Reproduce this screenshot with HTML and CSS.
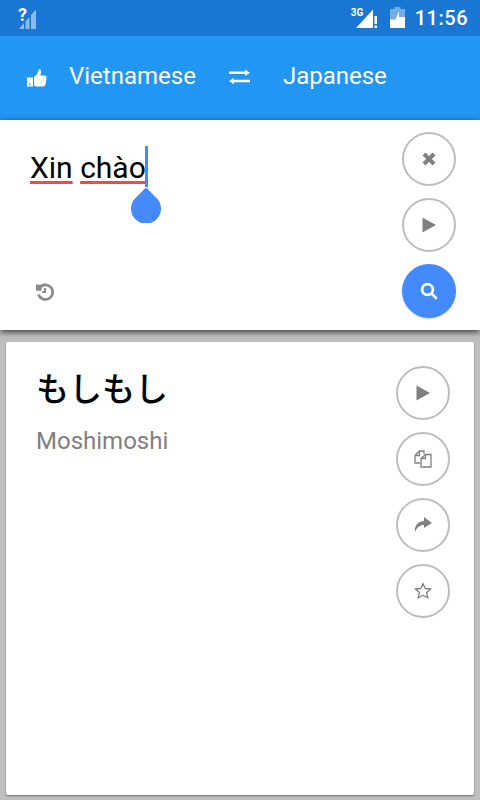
FILE: index.html
```html
<!DOCTYPE html>
<html lang="en">
<head>
<meta charset="utf-8">
<title>Translate</title>
<link rel="stylesheet" href="styles.css">
</head>
<body>
<div class="app">
  <header class="status">
    <div class="status-left">
      <span class="q">?</span>
      <svg class="bars" width="20" height="20" viewBox="0 0 20 20"><path fill="#fff" fill-opacity=".5" d="M1 20L6 14V20ZM7.500 12.500L11.500 8V20H7.500ZM13 6L18 0.500V20H13Z"/></svg>
    </div>
    <div class="status-right">
      <span class="net">3G</span>
      <svg class="sig" width="22" height="19" viewBox="0 0 22 19"><path fill="#fff" d="M0 19L17 0.500V19Z"/><path fill="#fff" d="M18.500 7H21V15H18.500ZM18.500 16.500H21V19H18.500Z"/></svg>
      <svg class="batt" width="15" height="21" viewBox="0 0 15 21"><path fill="#fff" fill-opacity=".4" d="M4.500 0H10.500V2H15V21H0V2H4.500Z"/><path fill="#fff" d="M0 21V12.500H5.500L9 4.500V10H15V21Z"/></svg>
      <span class="time">11:56</span>
    </div>
  </header>

  <nav class="toolbar">
    <svg class="thumb" width="20" height="20" viewBox="0 0 20 20"><path fill="#fff" d="M0 9.500H6V18.500H0Z"/><path fill="#2196f3" d="M2 15.500H3.500V17H2Z"/><path fill="#fff" d="M7 9L10.500 5.500L12 1Q14.500 1 14 4.500L13.300 7.500H18Q20 8 19.500 10L18.500 16.500Q18 18.500 16 18.500H10Q8 18.500 7 17.500Z"/></svg>
    <span class="lang lang-src">Vietnamese</span>
    <svg class="swap" width="24" height="18" viewBox="0 0 24 18"><path fill="#fff" d="M1 3.500H17V1.500L22 4.800L17 8V6H1ZM22 11.700V14.300H6V16.300L1 13L6 9.700V11.700Z"/></svg>
    <span class="lang">Japanese</span>
  </nav>

  <section class="input-panel">
    <div class="input-main">
      <div class="input-line">
        <span class="word">Xin</span> <span class="word word-last">chào</span><span class="caret"></span>
        <svg class="handle" width="32" height="36" viewBox="0 0 32 36"><path fill="#448aff" d="M16 0.500L26 10.500A15 15 0 1 1 6 10.500Z"/></svg>
      </div>
      <svg class="history" width="20" height="20" viewBox="0 0 20 20"><path fill="none" stroke="#8a8a8a" stroke-width="2.600" d="M4.400 6A7.300 7.300 0 1 1 3.500 12.500"/><path fill="#8a8a8a" d="M1 2.500L8 3L6 9L1 8.500Z"/><path fill="#8a8a8a" d="M9 6H11V11H7V9.300H9Z"/></svg>
    </div>
    <div class="actions">
      <button class="circle"><svg width="14" height="14" viewBox="0 0 14 14"><path stroke="#808080" stroke-width="4" d="M2 2L12 12M12 2L2 12"/></svg></button>
      <button class="circle"><svg width="16" height="18" viewBox="0 0 16 18"><path fill="#808080" d="M1.500 1.500L15 9L1.500 16.500Z"/></svg></button>
      <button class="circle circle-primary"><svg width="20" height="20" viewBox="0 0 20 20"><circle cx="8.500" cy="8.500" r="5.400" fill="none" stroke="#fff" stroke-width="2.800"/><path stroke="#fff" stroke-width="2.600" stroke-linecap="round" d="M12.500 12.500L17 17"/></svg></button>
    </div>
  </section>

  <main class="result-area">
    <article class="card">
      <div class="card-text">
        <div class="jp">もしもし</div>
        <div class="roman">Moshimoshi</div>
      </div>
      <div class="actions">
        <button class="circle"><svg width="16" height="18" viewBox="0 0 16 18"><path fill="#808080" d="M1.500 1.500L15 9L1.500 16.500Z"/></svg></button>
        <button class="circle"><svg width="20" height="20" viewBox="0 0 20 20"><path fill="none" stroke="#808080" stroke-width="1.300" d="M7 14H2V6.500L6.500 2H11V5M6.500 2V6.500H2M8 9.500L12.500 5.500H18V18H8ZM12.500 5.500V9.500H8"/></svg></button>
        <button class="circle"><svg width="20" height="20" viewBox="0 0 20 20"><path fill="#808080" d="M11 2L19 8L11 13V10C7 10 4 12 2 17C1 11 5 6 11 6Z"/></svg></button>
        <button class="circle"><svg width="20" height="20" viewBox="0 0 20 20"><path fill="none" stroke="#808080" stroke-width="1.300" stroke-linejoin="round" d="M10 2.500L12.200 7.500L17.800 8L13.600 11.600L14.900 17L10 14.200L5.100 17L6.400 11.600L2.200 8L7.800 7.500Z"/></svg></button>
      </div>
    </article>
  </main>
</div>
</body>
</html>
```

FILE: styles.css
```css
* { box-sizing: border-box; }
html, body { margin: 0; padding: 0; }
body { font-family: Roboto, "Noto Sans CJK JP", sans-serif; }
.app { width: 480px; height: 800px; display: flex; flex-direction: column; overflow: hidden; background: #bfbfbf; }

.status { height: 36px; flex: none; background: #1976d2; color: #fff; display: flex; justify-content: space-between; align-items: center; }
.status-left { display: flex; align-items: center; padding-left: 18px; height: 36px; }
.q { font-size: 18px; font-weight: 700; width: 0; position: relative; top: -4px; }
.bars { margin-top: 2px; margin-left: 0; }
.status-right { display: flex; align-items: center; padding-right: 12px; }
.net { font-size: 10px; font-weight: 700; width: 0; position: relative; left: -5px; top: -6px; white-space: nowrap; }
.sig { margin-left: 0; margin-top: 0; }
.batt { margin-left: 12px; margin-top: -2px; }
.time { font-size: 20px; font-weight: 500; margin-left: 10px; letter-spacing: .5px; }

.toolbar { height: 84px; flex: none; background: #2196f3; display: flex; align-items: center; padding: 0 0 4px 27px; color: #fff; }
.thumb { margin-top: 4px; }
.lang { font-size: 24px; }
.lang-src { margin-left: 22px; }
.swap { margin: 2px 31px 0 32px; }

.input-panel { height: 210px; flex: none; background: #fff; display: flex; justify-content: space-between; padding: 12px 24px 12px 30px; box-shadow: 0 2px 6px rgba(0,0,0,.7); position: relative; }
.input-main { display: flex; flex-direction: column; justify-content: space-between; }
.input-line { position: relative; font-size: 30px; line-height: 48px; color: #000; margin-top: 12px; white-space: nowrap; }
.word { text-decoration: underline #f44; text-decoration-thickness: 3px; text-underline-offset: 3px; }
.caret { position: absolute; left: 115px; top: 2px; width: 3px; height: 41px; background: #448aff; }
.handle { position: absolute; left: 100px; top: 43px; }
.history { margin: 0 0 16px 5px; }

.actions { display: flex; flex-direction: column; gap: 12px; }
.circle { width: 54px; height: 54px; border-radius: 50%; border: 2px solid #bdbdbd; background: #fff; padding: 0; display: flex; align-items: center; justify-content: center; }
.circle-primary { background: #448aff; border: 0; box-shadow: 0 1px 2px rgba(0,0,0,.2); }

.result-area { flex: 1; padding: 12px 6px 5px; }
.card { height: 100%; background: #fff; border-radius: 2px; box-shadow: 0 1px 2px rgba(0,0,0,.45); display: flex; justify-content: space-between; padding: 24px 24px 0 30px; }
.jp { font-size: 33px; font-weight: 500; line-height: 48px; color: #000; }
.roman { font-size: 24px; line-height: 32px; color: #808080; margin-top: 11px; }
```
